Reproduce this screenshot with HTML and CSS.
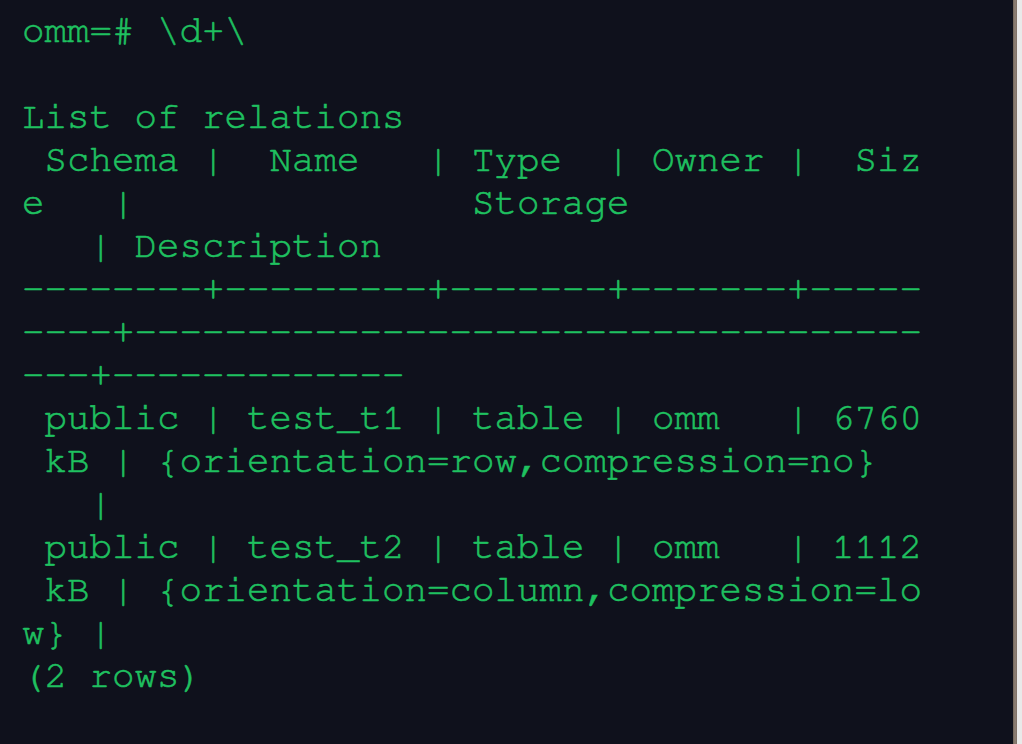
FILE: index.html
```html
<!DOCTYPE html>
<html>
<head>
<meta charset="utf-8">
<link rel="stylesheet" href="styles.css">
</head>
<body>
<div class="screen">
<main class="terminal">
<pre class="output">omm=# \d+\

List of relations
 Schema |  Name   | Type  | Owner |  Siz
e   |               Storage
   | Description
--------+---------+-------+-------+-----
----+-----------------------------------
---+-------------
 public | test_t1 | table | omm   | 6760
 kB | {orientation=row,compression=no}
   |
 public | test_t2 | table | omm   | 1112
 kB | {orientation=column,compression=lo
w} |
(2 rows)</pre>
</main>
<div class="edge"></div>
<div class="margin"></div>
</div>
</body>
</html>
```

FILE: styles.css
```css
html, body {
  margin: 0;
  padding: 0;
  height: 100%;
  background: #0f111c;
}

.screen {
  display: flex;
  width: 1022px;
  height: 744px;
  overflow: hidden;
}

.terminal {
  flex: 0 0 1013px;
  background: #0f111c;
  padding: 10px 0 0 22px;
  box-sizing: border-box;
}

.output {
  margin: 0;
  font-family: "Nimbus Mono PS", "Nimbus Mono L", "FreeMono", "Courier 10 Pitch", "Liberation Mono", monospace;
  font-size: 37.5px;
  line-height: 43px;
  color: #1fc160;
  -webkit-text-stroke: 0.6px #1fc160;
  white-space: pre;
}

.edge {
  flex: 0 0 4px;
  background: linear-gradient(to right, #6f6358, #8f8176, #7c6e64);
}

.margin {
  flex: 1 1 auto;
  background: #e9e9e9;
}
```
